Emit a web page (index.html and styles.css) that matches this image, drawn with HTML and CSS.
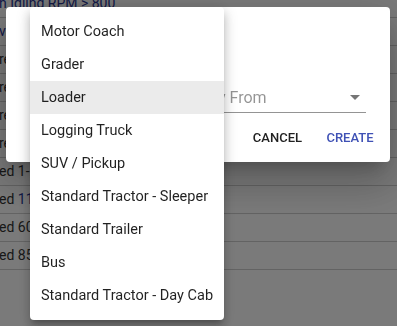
FILE: index.html
```html
<!DOCTYPE html>
<html lang="en">

<head>
    <meta charset="utf-8">
    <meta name="viewport" content="width=device-width, initial-scale=1.0">
    <title>Vehicle types</title>
    <link rel="stylesheet" href="styles.css">
</head>

<body>
    <!-- table behind the dialog -->
    <section class="tabel">
        <div class="raekke head"><span class="link">h Idling RPM &gt; 800</span></div>
        <div class="raekke"><span class="link">v Pattern Weekly</span></div>
        <div class="raekke">re Count</div>
        <div class="raekke">re Count</div>
        <div class="raekke">re Count</div>
        <div class="raekke">re Count</div>
        <div class="raekke">ed 1-<span class="link">65 mph</span></div>
        <div class="raekke">ed <span class="link">110 mph</span></div>
        <div class="raekke">ed 60 mph</div>
        <div class="raekke">ed 85 mph</div>
    </section>

    <div class="overlay"></div>

    <div class="dialog">
        <h2 class="titel">New Type</h2>
        <div class="felt">
            <span class="label">Select Vehicle Type to Copy From</span>
            <svg class="pil" viewBox="0 0 10 5" width="10" height="5"><path d="M0 0l5 5 5-5z" fill="currentColor"/></svg>
        </div>
        <div class="knapper">
            <button class="knap">Cancel</button>
            <button class="knap primaer">Create</button>
        </div>
    </div>

    <ul class="menu">
        <li>Motor Coach</li>
        <li>Grader</li>
        <li class="valgt">Loader</li>
        <li>Logging Truck</li>
        <li>SUV / Pickup</li>
        <li>Standard Tractor - Sleeper</li>
        <li>Standard Trailer</li>
        <li>Bus</li>
        <li>Standard Tractor - Day Cab</li>
    </ul>
</body>

</html>
```

FILE: styles.css
```css
html {
    font-family: Roboto, 'Liberation Sans', sans-serif;
}

body {
    margin: 0;
    background-color: white;
    overflow: hidden;
}

.tabel {
    margin-top: -10px;
}

.raekke {
    height: 27px;
    line-height: 27px;
    border-bottom: 1px solid #cfcfcf;
    font-size: 14px;
    color: #333;
    white-space: nowrap;
    text-indent: -1px;
}

.link {
    color: #283593;
}

.overlay {
    position: fixed;
    top: 0;
    left: 0;
    right: 0;
    bottom: 0;
    background-color: rgba(0, 0, 0, 0.52);
}

.dialog {
    position: fixed;
    top: 7px;
    left: 6px;
    width: 384px;
    height: 155px;
    background-color: white;
    border-radius: 4px;
    box-shadow: 0 11px 15px -7px rgba(0, 0, 0, .2), 0 24px 38px 3px rgba(0, 0, 0, .14), 0 9px 46px 8px rgba(0, 0, 0, .12);
}

.titel {
    margin: 0;
    padding: 24px 24px 0;
    height: 77px;
    box-sizing: border-box;
    font-size: 20px;
    font-weight: 500;
    color: #212121;
}

.felt {
    margin: 0 24px;
    height: 29px;
    padding: 2px 0;
    box-sizing: border-box;
    border-bottom: 1px solid rgba(0, 0, 0, 0.42);
    display: flex;
    align-items: center;
    justify-content: space-between;
}

.label {
    font-size: 16px;
    color: rgba(0, 0, 0, 0.42);
    line-height: 24px;
    white-space: nowrap;
}

.pil {
    color: rgba(0, 0, 0, 0.54);
    margin-right: 6px;
    margin-top: -2px;
}

.knapper {
    display: flex;
    justify-content: flex-end;
    gap: 8px;
    padding: 6px 8px 6px;
}

.knap {
    min-width: 64px;
    height: 36px;
    padding: 0 8px;
    border: none;
    background: none;
    font-family: Roboto, sans-serif;
    font-size: 13px;
    font-weight: 500;
    text-transform: uppercase;
    color: #212121;
}

.primaer {
    color: #3f51b5;
}

.menu {
    position: fixed;
    top: 7px;
    left: 30px;
    width: 194px;
    margin: 0;
    padding: 8px 0;
    list-style: none;
    background-color: white;
    border-radius: 4px;
    box-shadow: 0 5px 5px -3px rgba(0, 0, 0, .2), 0 8px 10px 1px rgba(0, 0, 0, .14), 0 3px 14px 2px rgba(0, 0, 0, .12);
}

.menu li {
    height: 33px;
    line-height: 33px;
    padding: 0 11px;
    font-size: 14.5px;
    color: rgba(0, 0, 0, 0.87);
    white-space: nowrap;
}

.menu .valgt {
    background-color: #ebebeb;
}
```
